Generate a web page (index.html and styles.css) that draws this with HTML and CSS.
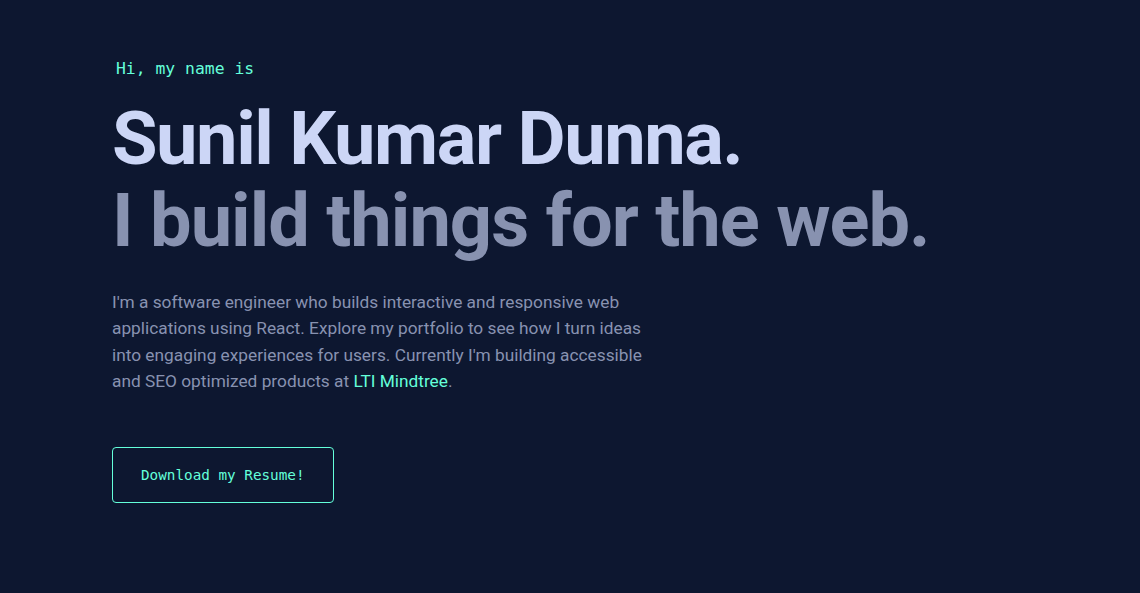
FILE: index.html
```html
<!DOCTYPE html>
<html lang="en">
<head>
<meta charset="utf-8">
<title>Sunil Kumar Dunna</title>
<link rel="stylesheet" href="styles.css">
</head>
<body>
<main class="hero">
  <p class="greeting">Hi, my name is</p>
  <h1 class="name">Sunil Kumar Dunna.</h1>
  <h2 class="tagline">I build things for the web.</h2>
  <p class="intro">I'm a software engineer who builds interactive and responsive web applications using React. Explore my portfolio to see how I turn ideas into engaging experiences for users. Currently I'm building accessible and SEO optimized products at <a class="link" href="#">LTI Mindtree</a>.</p>
  <a class="resume" href="#">Download my Resume!</a>
</main>
</body>
</html>
```
FILE: styles.css
```css
html, body {
  margin: 0;
  padding: 0;
  background: #0d1730;
}
body {
  height: 593px;
  overflow: hidden;
  font-family: Roboto, "Liberation Sans", sans-serif;
}
.hero {
  display: flex;
  flex-direction: column;
  align-items: flex-start;
  padding: 61px 0 0 112px;
}
.greeting {
  margin: 0 0 21px 4px;
  font-family: "DejaVu Sans Mono", "Liberation Mono", monospace;
  font-size: 16.4px;
  line-height: 1;
  color: #64ffda;
}
.name, .tagline {
  margin: 0;
  font-family: Roboto, "Liberation Sans", sans-serif;
  font-weight: 700;
  font-size: 74px;
  line-height: 1.1;
}
.name {
  color: #ccd6f6;
  letter-spacing: -1.45px;
}
.tagline {
  color: #8892b0;
  letter-spacing: -1px;
}
.intro {
  margin: 28px 0 0;
  max-width: 540px;
  font-family: Roboto, "Liberation Sans", sans-serif;
  font-size: 17.3px;
  line-height: 26.3px;
  color: #8892b0;
}
.link {
  color: #64ffda;
  text-decoration: none;
}
.resume {
  margin-top: 53px;
  padding: 20px 28px;
  border: 1px solid #64ffda;
  border-radius: 4px;
  font-family: "DejaVu Sans Mono", "Liberation Mono", monospace;
  font-size: 14.3px;
  line-height: 14px;
  color: #64ffda;
  text-decoration: none;
}
```
